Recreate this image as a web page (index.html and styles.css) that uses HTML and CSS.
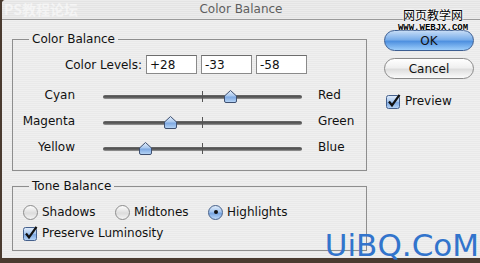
FILE: index.html
```html
<!DOCTYPE html>
<html lang="en">
<head>
    <meta charset="UTF-8">
    <title>Color Balance</title>
    <link rel="stylesheet" href="styles.css">
</head>
<body>
    <div class="window">
        <div class="titlebar">
            <span class="mark-left">PS教程论坛</span>
            <span class="title">Color Balance</span>
        </div>
        <div class="dialog">
            <div class="main">
                <fieldset class="group">
                    <legend>Color Balance</legend>
                    <div class="levels">
                        <label class="levels-label">Color Levels:</label>
                        <input type="text" value="+28">
                        <input type="text" value="-33">
                        <input type="text" value="-58">
                    </div>
                    <div class="slider-row">
                        <span class="from">Cyan</span>
                        <div class="slider">
                            <div class="track"></div>
                            <div class="tick"></div>
                            <svg class="thumb" style="left: 64%" width="13" height="13" viewBox="0 0 13 13">
                                <use href="#thumb"/>
                            </svg>
                        </div>
                        <span class="to">Red</span>
                    </div>
                    <div class="slider-row">
                        <span class="from">Magenta</span>
                        <div class="slider">
                            <div class="track"></div>
                            <div class="tick"></div>
                            <svg class="thumb" style="left: 33.5%" width="13" height="13" viewBox="0 0 13 13">
                                <use href="#thumb"/>
                            </svg>
                        </div>
                        <span class="to">Green</span>
                    </div>
                    <div class="slider-row">
                        <span class="from">Yellow</span>
                        <div class="slider">
                            <div class="track"></div>
                            <div class="tick"></div>
                            <svg class="thumb" style="left: 21%" width="13" height="13" viewBox="0 0 13 13">
                                <use href="#thumb"/>
                            </svg>
                        </div>
                        <span class="to">Blue</span>
                    </div>
                </fieldset>

                <fieldset class="group tone">
                    <legend>Tone Balance</legend>
                    <div class="radios">
                        <label class="radio-item"><span class="radio"></span>Shadows</label>
                        <label class="radio-item mid"><span class="radio"></span>Midtones</label>
                        <label class="radio-item"><span class="radio on"></span>Highlights</label>
                    </div>
                    <label class="check-item">
                        <svg class="check" width="15" height="15" viewBox="0 0 15 15"><use href="#checkbox"/></svg>
                        Preserve Luminosity
                    </label>
                </fieldset>
            </div>

            <div class="side">
                <button class="btn ok">OK</button>
                <button class="btn">Cancel</button>
                <label class="check-item preview">
                    <svg class="check" width="15" height="15" viewBox="0 0 15 15"><use href="#checkbox"/></svg>
                    Preview
                </label>
            </div>
        </div>
    </div>

    <div class="mark-right">
        <span class="cn">网页教学网</span>
        <span class="url">WWW.WEBJX.COM</span>
    </div>
    <div class="mark-bottom">UiBQ.CoM</div>

    <!-- shared shapes -->
    <svg width="0" height="0" class="defs">
        <defs>
            <linearGradient id="aqua" x1="0" y1="0" x2="0" y2="1">
                <stop offset="0" stop-color="#e4eefb"/>
                <stop offset="0.45" stop-color="#a9c8ee"/>
                <stop offset="0.55" stop-color="#7ea9e2"/>
                <stop offset="1" stop-color="#b9d6f6"/>
            </linearGradient>
            <symbol id="thumb" viewBox="0 0 13 13">
                <path d="M6.5 0.5 L12.5 6 L12.5 11 Q12.5 12.5 11 12.5 L2 12.5 Q0.5 12.5 0.5 11 L0.5 6 Z"
                      fill="url(#aqua)" stroke="#3f5070" stroke-width="1"/>
            </symbol>
            <symbol id="checkbox" viewBox="0 0 15 15">
                <rect x="0.5" y="1.5" width="13" height="13" rx="2" fill="url(#aqua)" stroke="#45608c"/>
                <path d="M3 7.5 L6 11.5 L13.5 0.8" fill="none" stroke="#111" stroke-width="2.2"/>
            </symbol>
        </defs>
    </svg>
</body>
</html>
```

FILE: styles.css
```css
body {
    margin: 0;
    width: 480px;
    height: 263px;
    overflow: hidden;
    background-color: #4a3b30;
    font-family: "DejaVu Sans", Verdana, sans-serif;
    font-size: 12px;
    color: #111;
    position: relative;
}
.window {
    margin-left: 2px;
    width: 478px;
    height: 258px;
    border-top-left-radius: 4px;
    background: repeating-linear-gradient(to bottom, #efefef 0, #efefef 1px, #e9e9e9 1px, #e9e9e9 2px);
}
.titlebar {
    height: 19px;
    border-bottom: 1px solid #9a9a9a;
    display: flex;
    align-items: center;
    justify-content: center;
    position: relative;
    background: repeating-linear-gradient(to bottom, #ececec 0, #ececec 1px, #e4e4e4 1px, #e4e4e4 2px);
    border-top-left-radius: 4px;
}
.title {
    color: #5e5e5e;
    line-height: 19px;
}
.mark-left {
    position: absolute;
    left: 2px;
    top: 2px;
    font-family: "Noto Sans CJK SC", sans-serif;
    font-weight: bold;
    font-size: 14px;
    line-height: 15px;
    color: rgba(255, 255, 255, 0.55);
}
.dialog {
    display: flex;
}
.main {
    margin-left: 10px;
    width: 355px;
}
.group {
    margin: 12px 0 0;
    padding: 0 0 10px;
    border: 1px solid #8e8e8e;
}
.group legend {
    margin-left: 16px;
    padding: 0 3px;
    line-height: 15px;
}
.levels {
    display: flex;
    align-items: center;
    gap: 4px;
    margin-top: 8px;
}
.levels-label {
    width: 129px;
    text-align: right;
}
.levels input {
    box-sizing: border-box;
    width: 51px;
    height: 19px;
    margin: 0;
    padding: 0 3px;
    border: 1px solid #8a8a8a;
    border-top-color: #6c6c6c;
    background: white;
    font-family: "DejaVu Sans", Verdana, sans-serif;
    font-size: 12px;
    color: #111;
}
.slider-row {
    display: flex;
    align-items: center;
    height: 26px;
}
.levels + .slider-row {
    margin-top: 8px;
}
.from {
    width: 62px;
    text-align: right;
}
.to {
    margin-left: 16px;
}
.slider {
    position: relative;
    margin-left: 28px;
    width: 199px;
    height: 14px;
    margin-top: 3px;
}
.track {
    position: absolute;
    left: 0;
    right: 0;
    top: 5px;
    height: 4px;
    border-radius: 2px;
    background: linear-gradient(to bottom, #6a6a6a, #4e4e4e 50%, #9c9c9c);
}
.tick {
    position: absolute;
    left: 99px;
    top: 1px;
    width: 1px;
    height: 11px;
    background-color: #555;
}
.thumb {
    position: absolute;
    top: 0;
    margin-left: -6px;
}
.tone {
    margin-top: 8px;
    padding-bottom: 8px;
}
.radios {
    display: flex;
    align-items: center;
    height: 18px;
    margin-top: 9px;
    padding-left: 10px;
}
.radio-item {
    display: flex;
    align-items: center;
    gap: 4px;
    width: 92px;
}
.radio-item.mid {
    width: 93px;
}
.radio {
    box-sizing: border-box;
    width: 15px;
    height: 15px;
    border-radius: 50%;
    border: 1px solid #8c8c8c;
    background: linear-gradient(to bottom, #fdfdfd, #dcdcdc 55%, #f4f4f4);
    display: flex;
    align-items: center;
    justify-content: center;
}
.radio.on {
    border-color: #46608a;
    background: linear-gradient(to bottom, #e0ecfa, #a4c5ee 45%, #77a4e0 55%, #bcd8f6);
}
.radio.on::after {
    content: "";
    width: 4px;
    height: 4px;
    border-radius: 50%;
    background-color: #111;
}
.check-item {
    display: flex;
    align-items: center;
    gap: 4px;
    height: 18px;
    margin-top: 3px;
    padding-left: 10px;
}
.check {
    display: block;
}
.side {
    margin-left: 17px;
    padding-top: 10px;
    width: 90px;
}
.btn {
    display: block;
    box-sizing: border-box;
    width: 90px;
    height: 21px;
    margin: 0 0 7px;
    padding: 0;
    border: 1px solid #8a8a8a;
    border-radius: 11px;
    background: linear-gradient(to bottom, #ffffff, #f0f0f0 45%, #dedede 55%, #fbfbfb);
    font-family: "DejaVu Sans", Verdana, sans-serif;
    font-size: 12px;
    color: #111;
}
.btn.ok {
    border-color: #3c5e92;
    background: linear-gradient(to bottom, #c4dbf6, #7aaeea 45%, #4f91e0 55%, #9ccdfa);
}
.preview {
    margin-top: 13px;
    padding-left: 2px;
}
.mark-right {
    position: absolute;
    left: 397px;
    top: 8px;
    width: 72px;
    display: flex;
    flex-direction: column;
    align-items: center;
}
.mark-right .cn {
    font-family: "Noto Sans CJK SC", sans-serif;
    font-size: 12px;
    line-height: 14px;
    color: #000;
    text-shadow: 0 0 2px #fff, 0 0 2px #fff, 0 0 2px #fff;
}
.mark-right .url {
    font-family: "Liberation Mono", monospace;
    font-weight: bold;
    font-size: 9px;
    line-height: 9px;
    margin-top: 2px;
    color: #000;
    text-shadow: 0 0 2px #fff, 0 0 2px #fff;
}
.mark-bottom {
    position: absolute;
    right: 1px;
    top: 228px;
    font-family: "DejaVu Sans", Verdana, sans-serif;
    font-size: 31px;
    line-height: 34px;
    color: #3274cc;
    white-space: nowrap;
}
.defs {
    position: absolute;
}
```
